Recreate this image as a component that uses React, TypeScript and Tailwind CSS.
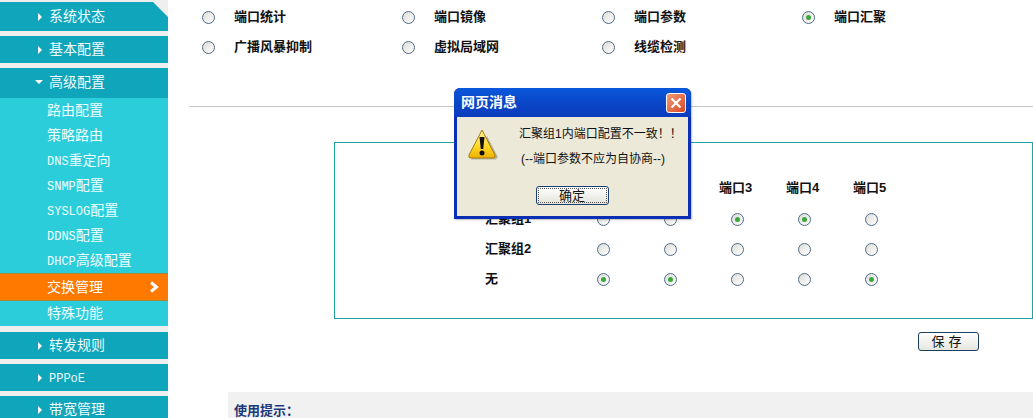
import React from 'react';

const FONT = '"Liberation Sans", "Noto Sans CJK SC", sans-serif';

// latin in the menu is half width, about 7px per letter
const MenuText = ({ text }: { text: string }) => (
  <span>
    {text.split(/([A-Za-z]+)/).map((part, i) =>
      /[A-Za-z]/.test(part) ? (
        <span key={i} className="font-['Liberation_Mono'] text-[12px]">{part}</span>
      ) : (
        <span key={i}>{part}</span>
      ),
    )}
  </span>
);

const Radio = ({ checked = false }: { checked?: boolean }) => (
  <span className="flex h-[13px] w-[13px] shrink-0 items-center justify-center rounded-full border border-[#4d6b8a] bg-linear-to-br from-[#dcdcd7] to-white">
    {checked && <span className="h-[5px] w-[5px] rounded-full bg-[#3aa83a]" />}
  </span>
);

const GroupHead = ({ label, open = false, h, notch = false }: { label: string; open?: boolean; h: string; notch?: boolean }) => (
  <div className={`relative flex shrink-0 items-center bg-[#0fa5bb] pl-[38px] text-[14px] text-[#eefcff] ${h}`}>
    {open ? (
      <span className="ml-[-3px] mr-[6px] h-0 w-0 border-x-[4px] border-t-[4px] border-x-transparent border-t-white" />
    ) : (
      <span className="mr-[7px] h-0 w-0 border-y-[4px] border-l-[4px] border-y-transparent border-l-white" />
    )}
    <MenuText text={label} />
    {notch && (
      <svg className="absolute right-0 top-0" width="16" height="16" viewBox="0 0 16 16">
        <polygon points="1,0 16,0 16,15" fill="#efefef" />
      </svg>
    )}
  </div>
);

const SubItem = ({ label }: { label: string }) => (
  <div className="flex h-[25px] shrink-0 items-center pl-[47px] text-[14px] text-[#effdff]">
    <MenuText text={label} />
  </div>
);

const Sidebar = () => (
  <div className="flex h-[418px] w-[168px] shrink-0 flex-col overflow-hidden bg-[#efefef] pt-[2px]">
    <GroupHead label="系统状态" h="h-[29px]" notch />
    <div className="mt-[5px] shrink-0"><GroupHead label="基本配置" h="h-[27px]" /></div>
    <div className="mt-[5px] shrink-0"><GroupHead label="高级配置" h="h-[30px] pb-[2px]" open /></div>
    <div className="flex h-[228px] shrink-0 flex-col bg-[#2ccddb]">
      {['路由配置', '策略路由', 'DNS重定向', 'SNMP配置', 'SYSLOG配置', 'DDNS配置', 'DHCP高级配置'].map((s) => (
        <SubItem key={s} label={s} />
      ))}
      <div className="relative flex h-[28px] shrink-0 items-center border-y border-[#a08a3a] bg-[#ff7800] pl-[47px] text-[14px] text-white">
        交换管理
        <svg className="absolute left-[149px] top-[7px]" width="11" height="12" viewBox="0 0 11 12">
          <path d="M2 1.5 L7.5 6 L2 10.5" fill="none" stroke="white" strokeWidth="3" />
        </svg>
      </div>
      <SubItem label="特殊功能" />
    </div>
    <div className="mt-[6px] shrink-0"><GroupHead label="转发规则" h="h-[27px]" /></div>
    <div className="mt-[5px] shrink-0"><GroupHead label="PPPoE" h="h-[27px]" /></div>
    <div className="mt-[5px] shrink-0"><GroupHead label="带宽管理" h="h-[27px]" /></div>
  </div>
);

const topRows: { label: string; checked?: boolean }[][] = [
  [{ label: '端口统计' }, { label: '端口镜像' }, { label: '端口参数' }, { label: '端口汇聚', checked: true }],
  [{ label: '广播风暴抑制' }, { label: '虚拟局域网' }, { label: '线缆检测' }],
];

const groups = [
  { label: '汇聚组1', sel: [false, false, true, true, false] },
  { label: '汇聚组2', sel: [false, false, false, false, false] },
  { label: '无', sel: [true, true, false, false, true] },
];

const Dialog = () => (
  <div className="absolute left-[454px] top-[88px] flex h-[131px] w-[237px] flex-col rounded-t-[6px] bg-[#0a2fb4] shadow-[1px_1px_2px_rgba(0,0,0,0.25)]">
    <div className="flex h-[29px] shrink-0 items-center justify-between rounded-t-[6px] bg-linear-to-b from-[#0a58dc] via-[#0a46c8] to-[#0a3cbc] pl-[7px] pr-[5px] text-[14px] font-bold text-white">
      <span>网页消息</span>
      <span className="flex h-[20px] w-[20px] items-center justify-center rounded-[3px] border border-white bg-linear-to-br from-[#f09a78] to-[#d8441c]">
        <svg width="12" height="12" viewBox="0 0 12 12">
          <path d="M1.5 1.5 L10.5 10.5 M10.5 1.5 L1.5 10.5" stroke="white" strokeWidth="2.2" />
        </svg>
      </span>
    </div>
    <div className="mx-[3px] mb-[3px] flex flex-1 flex-col bg-[#ece9d8]">
      <div className="flex">
        <svg className="ml-[10px] mt-[11px] shrink-0" width="32" height="33" viewBox="0 0 32 33">
          <defs>
            <linearGradient id="warn" x1="0" y1="0" x2="0" y2="1">
              <stop offset="0" stopColor="#fff3a0" />
              <stop offset="0.6" stopColor="#ffd722" />
              <stop offset="1" stopColor="#f0b000" />
            </linearGradient>
          </defs>
          <path d="M4 31.5 L29 31.5 L31 29 L20 8 Z" fill="#b8b4a0" />
          <path d="M15 2 L28 27 Q29 30 26 30 L4 30 Q1 30 2 27 Z" fill="url(#warn)" stroke="#a07c10" strokeWidth="1" strokeLinejoin="round" />
          <path d="M12.5 9 L17.5 9 L16.2 21 L13.8 21 Z" fill="#111" />
          <circle cx="15" cy="25" r="2.5" fill="#111" />
        </svg>
        <div className="ml-[20px] flex flex-col items-start text-[12px] text-[#111]">
          <span className="mt-[9px] leading-[16px] whitespace-nowrap">汇聚组1内端口配置不一致！！</span>
          <span className="mt-[9px] ml-[2px] leading-[16px] whitespace-nowrap">(--端口参数不应为自协商--)</span>
        </div>
      </div>
      <div className="mt-[19px] flex justify-center">
        <button className="ml-[-1px] flex h-[19px] w-[73px] items-center justify-center rounded-[3px] border border-[#1c3f73] bg-linear-to-b from-white to-[#e3e3da] text-[13px] text-[#111] outline-1 outline-offset-[-3px] outline-dotted outline-[#555]">
          确定
        </button>
      </div>
    </div>
  </div>
);

const Main = () => (
  <div className="flex min-w-0 flex-1 flex-col">
    <div className="flex shrink-0 flex-col gap-[18px] pl-[34px] pt-[11px]">
      {topRows.map((row, i) => (
        <div key={i} className="flex h-[12px]">
          {row.map((item) => (
            <div key={item.label} className="flex w-[200px] items-center gap-[19px] text-[13px] font-bold text-[#111]">
              <Radio checked={item.checked} />
              <span>{item.label}</span>
            </div>
          ))}
        </div>
      ))}
    </div>
    <div className="ml-[21px] mt-[53px] h-px shrink-0 bg-[#c8c8c8]" />
    <div className="ml-[166px] mt-[35px] h-[177px] shrink-0 border border-[#1fa3a8] pl-[150px] pt-[37px]">
      <div className="flex h-[16px] items-center pl-[83px] text-[13px] font-bold text-[#111]">
        {['端口1', '端口2', '端口3', '端口4', '端口5'].map((p, i) => (
          <span key={p} className="w-[67px] text-center">{i > 1 ? p : ''}</span>
        ))}
      </div>
      <div className="mt-[8px] flex flex-col">
        {groups.map((g) => (
          <div key={g.label} className="flex h-[30px] items-center">
            <span className="w-[85px] text-[13px] font-bold text-[#111]">{g.label}</span>
            {g.sel.map((c, i) => (
              <span key={i} className="flex w-[67px] justify-center">
                <Radio checked={c} />
              </span>
            ))}
          </div>
        ))}
      </div>
    </div>
    <div className="mt-[13px] flex shrink-0 justify-end pr-[54px]">
      <button className="flex h-[19px] w-[61px] items-center justify-center rounded-[3px] border border-[#1c3f5f] bg-linear-to-b from-white to-[#e6e6e0] text-[13px] tracking-[4px] text-[#111]">
        保存
      </button>
    </div>
    <div className="ml-[60px] mt-[41px] min-h-0 flex-1 bg-[#f1f1f1] pl-[6px] pt-[11px] text-[13px] leading-[16px] font-bold text-[#1c3a7a]">
      使用提示：
    </div>
  </div>
);

const App: React.FC = () => {
  return (
    <div className="relative flex h-[418px] w-[1033px] overflow-hidden bg-white" style={{ fontFamily: FONT }}>
      <Sidebar />
      <Main />
      <Dialog />
    </div>
  );
};

export default App;
